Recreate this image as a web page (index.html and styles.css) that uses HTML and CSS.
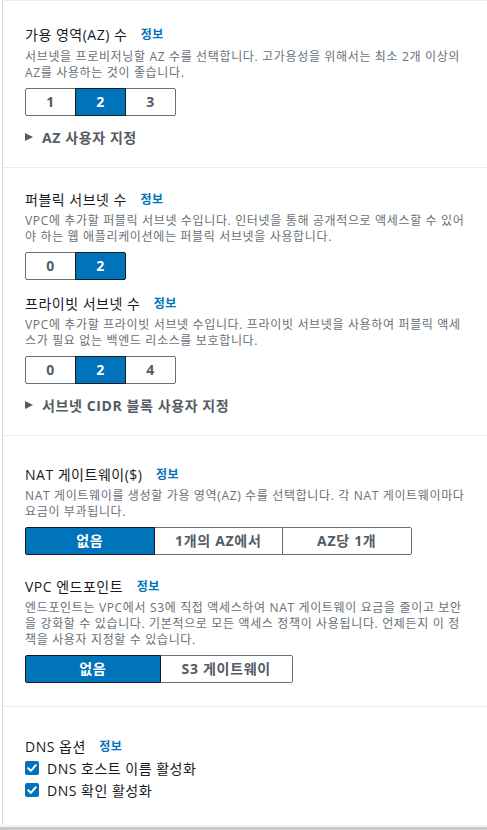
FILE: index.html
```html
<!DOCTYPE html>
<html lang="ko">
<head>
<meta charset="utf-8">
<link rel="stylesheet" href="styles.css">
</head>
<body>
<div class="page">
  <div class="panel">
    <section class="section s1">
      <div class="field">
        <div class="label"><span class="title">가용 영역(AZ) 수</span><a class="info">정보</a></div>
        <div class="desc">서브넷을 프로비저닝할 AZ 수를 선택합니다. 고가용성을 위해서는 최소 2개 이상의<br>AZ를 사용하는 것이 좋습니다.</div>
        <div class="seg">
          <button class="opt w50">1</button><button class="opt w50 on">2</button><button class="opt w50">3</button>
        </div>
      </div>
      <div class="expand"><span class="tri"></span>AZ 사용자 지정</div>
    </section>

    <section class="section s2">
      <div class="field">
        <div class="label"><span class="title">퍼블릭 서브넷 수</span><a class="info">정보</a></div>
        <div class="desc">VPC에 추가할 퍼블릭 서브넷 수입니다. 인터넷을 통해 공개적으로 액세스할 수 있어<br>야 하는 웹 애플리케이션에는 퍼블릭 서브넷을 사용합니다.</div>
        <div class="seg">
          <button class="opt w50">0</button><button class="opt w50 on">2</button>
        </div>
      </div>
      <div class="field sub">
        <div class="label"><span class="title">프라이빗 서브넷 수</span><a class="info">정보</a></div>
        <div class="desc">VPC에 추가할 프라이빗 서브넷 수입니다. 프라이빗 서브넷을 사용하여 퍼블릭 액세<br>스가 필요 없는 백엔드 리소스를 보호합니다.</div>
        <div class="seg">
          <button class="opt w50">0</button><button class="opt w50 on">2</button><button class="opt w50">4</button>
        </div>
      </div>
      <div class="expand"><span class="tri"></span>서브넷 CIDR 블록 사용자 지정</div>
    </section>

    <section class="section s3">
      <div class="field">
        <div class="label"><span class="title">NAT 게이트웨이($)</span><a class="info">정보</a></div>
        <div class="desc">NAT 게이트웨이를 생성할 가용 영역(AZ) 수를 선택합니다. 각 NAT 게이트웨이마다<br>요금이 부과됩니다.</div>
        <div class="seg">
          <button class="opt w129 on">없음</button><button class="opt w129">1개의 AZ에서</button><button class="opt w129">AZ당 1개</button>
        </div>
      </div>
      <div class="field sub2">
        <div class="label"><span class="title">VPC 엔드포인트</span><a class="info">정보</a></div>
        <div class="desc">엔드포인트는 VPC에서 S3에 직접 액세스하여 NAT 게이트웨이 요금을 줄이고 보안<br>을 강화할 수 있습니다. 기본적으로 모든 액세스 정책이 사용됩니다. 언제든지 이 정<br>책을 사용자 지정할 수 있습니다.</div>
        <div class="seg">
          <button class="opt w135 on">없음</button><button class="opt w133">S3 게이트웨이</button>
        </div>
      </div>
    </section>

    <section class="section s4">
      <div class="label"><span class="title">DNS 옵션</span><a class="info">정보</a></div>
      <label class="check first">
        <svg class="box" width="14" height="14" viewBox="0 0 14 14"><rect x="0" y="0" width="14" height="14" rx="2" fill="#0073bb"/><path d="M3.2 7.2 L5.9 9.9 L10.8 4.2" fill="none" stroke="#fff" stroke-width="2" stroke-linecap="round" stroke-linejoin="round"/></svg>
        <span>DNS 호스트 이름 활성화</span>
      </label>
      <label class="check">
        <svg class="box" width="14" height="14" viewBox="0 0 14 14"><rect x="0" y="0" width="14" height="14" rx="2" fill="#0073bb"/><path d="M3.2 7.2 L5.9 9.9 L10.8 4.2" fill="none" stroke="#fff" stroke-width="2" stroke-linecap="round" stroke-linejoin="round"/></svg>
        <span>DNS 확인 활성화</span>
      </label>
    </section>
  </div>
  <div class="footer"></div>
</div>
</body>
</html>
```

FILE: styles.css
```css
* { box-sizing: border-box; }
html, body { margin: 0; padding: 0; background: #fff; }
body {
  font-family: "Open Sans", "Noto Sans CJK KR", sans-serif;
  color: #16191f;
  width: 487px;
  height: 830px;
  overflow: hidden;
}
.page {
  height: 830px;
  display: flex;
  flex-direction: column;
}
.panel {
  flex: 1;
  margin-left: 2px;
  border-left: 1px solid #d5d9d9;
  border-top: 1px solid #eaeded;
  background: #fff;
}
.footer {
  height: 5px;
  border-top: 2px solid #f2f3f3;
  background: #c8c8c8;
}
.section {
  padding-left: 22px;
  padding-right: 10px;
  border-bottom: 1px solid #eaeded;
}
.s1 { padding-top: 24px; padding-bottom: 20px; }
.s2 { padding-top: 22px; padding-bottom: 20px; }
.s3 { padding-top: 29px; padding-bottom: 23px; }
.s4 { padding-top: 30px; padding-bottom: 0; border-bottom: none; }

.label {
  display: flex;
  align-items: center;
  height: 20px;
  line-height: 20px;
}
.title {
  font-size: 14px;
  letter-spacing: 0.5px;
  color: #16191f;
}
.info {
  margin-left: 13.5px;
  font-size: 12px;
  font-weight: 700;
  letter-spacing: 0.5px;
  color: #0073bb;
}
.desc {
  margin-top: 3px;
  font-size: 12px;
  line-height: 16px;
  letter-spacing: 0.65px;
  color: #687078;
  white-space: nowrap;
}
.s1 .desc { margin-top: 4px; }
.seg {
  display: flex;
  margin-top: 7px;
}
.opt {
  height: 28px;
  padding: 0;
  margin: 0;
  font-family: inherit;
  font-size: 14px;
  font-weight: 700;
  letter-spacing: 0.7px;
  color: #545b64;
  background: #fff;
  border: 1px solid #687078;
  border-radius: 0;
  line-height: 26px;
}
.opt + .opt { margin-left: -1px; }
.opt:first-child { border-radius: 2px 0 0 2px; }
.opt:last-child { border-radius: 0 2px 2px 0; }
.opt.on {
  background: #0073bb;
  color: #fff;
  border-color: #16191f;
  position: relative;
  z-index: 1;
}
.w50 { width: 51px; }
.w129 { width: 129.5px; }
.w135 { width: 135.5px; }
.w133 { width: 133.5px; }

.sub { margin-top: 14px; }
.sub2 { margin-top: 22px; }

.expand {
  margin-top: 11px;
  display: flex;
  align-items: center;
  height: 20px;
  font-size: 14px;
  font-weight: 700;
  letter-spacing: 0.6px;
  color: #545b64;
}
.tri {
  width: 0;
  height: 0;
  border-left: 8px solid #545b64;
  border-top: 4.5px solid transparent;
  border-bottom: 4.5px solid transparent;
  margin-right: 9px;
}
.check {
  display: flex;
  align-items: center;
  height: 22px;
  font-size: 14px;
  letter-spacing: 0.5px;
  color: #16191f;
}
.check.first { margin-top: 0; }
.box { margin-right: 8px; flex: none; }
```
